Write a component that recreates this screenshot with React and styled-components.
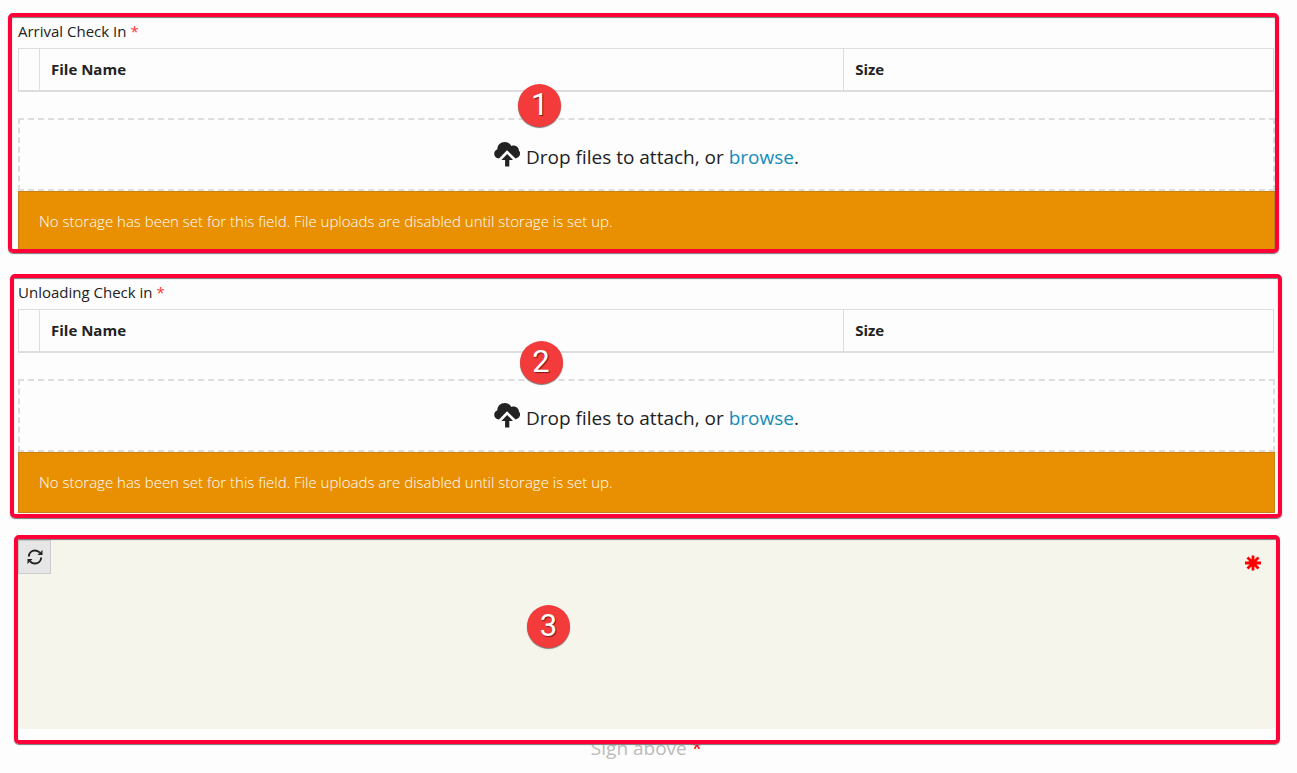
import React from "react";
import styled, { createGlobalStyle } from "styled-components";

const GlobalStyle = createGlobalStyle`
  *, *::before, *::after { box-sizing: border-box; }
  body {
    margin: 0;
    background: #fdfdfd;
    color: #222;
    font: 300 15px/20px "Open Sans", "Noto Sans", sans-serif;
  }
`;

const Page = styled.main`
  display: flex;
  flex-direction: column;
  padding: 21px 22px 12px 18px;
`;

const Section = styled.section`
  position: relative;
  margin-bottom: ${(p) => p.$gap}px;
`;

const FieldTitle = styled.h2`
  margin: 0 0 7px;
  font-size: 15px;
  line-height: 20px;
  font-weight: 400;
`;

const Required = styled.span`
  color: ${(p) => p.$color || "#f33"};
`;

const FileTable = styled.table`
  width: calc(100% - 1px);
  table-layout: fixed;
  border-collapse: separate;
  border-spacing: 0;
  border: 1px solid #ddd;
  border-bottom-width: 2px;
  margin-bottom: 26px;
`;

const HeadCell = styled.th`
  width: ${(p) => p.$width || "auto"};
  height: 41px;
  padding: 0 0 2px ${(p) => (p.$narrow ? 0 : 11)}px;
  border-right: ${(p) => (p.$last ? "none" : "1px solid #ddd")};
  text-align: left;
  font-size: 15px;
  line-height: 20px;
  font-weight: 700;
`;

const DropZone = styled.div`
  display: flex;
  align-items: center;
  justify-content: center;
  gap: 6px;
  height: 73px;
  padding-top: 4px;
  border: 2px dashed #ddd;
  font-size: 19px;
  line-height: 28px;
  font-weight: 400;
`;

const CloudIcon = styled.svg`
  width: 26px;
  height: 26px;
  margin-bottom: 5px;
  fill: #222;
`;

const BrowseLink = styled.a`
  color: #158cba;
  text-decoration: none;
`;

const Warning = styled.div`
  height: 61px;
  padding: 19px 20px;
  border: 1px solid #c98112;
  background: #e99002;
  color: #fff;
`;

const SignaturePad = styled.div`
  display: flex;
  justify-content: space-between;
  align-items: flex-start;
  height: 189px;
  border-radius: 4px;
  background: #f5f5eb;
`;

const ResetButton = styled.button`
  display: flex;
  align-items: center;
  justify-content: center;
  width: 33px;
  height: 34px;
  padding: 0;
  border: 1px solid #ccc;
  background: #e6e6e6;
  color: #222;
`;

const RefreshIcon = styled.svg`
  width: 16px;
  height: 16px;
`;

const AsteriskIcon = styled.svg`
  width: 16px;
  height: 16px;
  margin: 15px 14px;
`;

const SignCaption = styled.p`
  margin: 0;
  padding-top: 5px;
  color: #bbb;
  font-size: 19px;
  line-height: 28px;
  font-weight: 400;
  text-align: center;
`;

const Frame = styled.div`
  position: absolute;
  inset: ${(p) => p.$inset};
  border: 4px solid #ff0038;
  border-radius: 5px;
  box-shadow: 0 1px 1px #777, inset 0 1px 1px #777;
  pointer-events: none;
`;

const Badge = styled.span`
  position: absolute;
  top: ${(p) => p.$top}px;
  left: ${(p) => p.$left}%;
  width: 43px;
  height: 43px;
  border-radius: 50%;
  background: #f33b3b;
  box-shadow: 0 1px 1px #777;
  color: #fff;
  font: 400 31px/42px Roboto, sans-serif;
  text-align: center;
  text-shadow: 1px 1px 1px #7a1717;
`;

function UploadCloud() {
  return (
    <CloudIcon viewBox="0 0 26 26" aria-hidden="true">
      <path d="M5 17.500C2 17.200.2 15.300.2 12.800c0-2.200 1.300-3.900 3.200-4.500C3.300 4 6.500 1 10.700 1c3 0 5.400 1.500 6.700 4 .7-.3 1.300-.4 2-.4 3.200 0 5.500 2.300 5.500 5 .8.800 1.200 1.800 1.200 3 0 2.500-1.800 4.300-4.600 4.800L13 9.200Z" />
      <path d="M13.200 13 19 19h-3.700v6.500h-4.200V19H7.400Z" />
    </CloudIcon>
  );
}

function Refresh() {
  return (
    <RefreshIcon viewBox="0 0 16 16" aria-hidden="true">
      <path
        d="M1.800 7.500C2 4 4.700 1.500 8 1.500c2 0 3.600.8 4.800 2.200M14.200 8.500C14 12 11.300 14.500 8 14.500c-2 0-3.600-.8-4.800-2.200"
        fill="none"
        stroke="currentColor"
        strokeWidth="2"
      />
      <path d="M15.500 1v5H10.500ZM.5 15v-5h5Z" fill="currentColor" />
    </RefreshIcon>
  );
}

function Asterisk() {
  return (
    <AsteriskIcon viewBox="0 0 16 16" role="img" aria-label="Required">
      <path
        d="M8 .5v15M0 8h16M2.500 2.500l11 11M13.500 2.500l-11 11"
        stroke="#f00"
        strokeWidth="2.8"
      />
    </AsteriskIcon>
  );
}

function UploadField({ title, gap, frame, badge, badgeTop, badgeLeft }) {
  return (
    <Section $gap={gap}>
      <FieldTitle>
        {title} <Required>*</Required>
      </FieldTitle>
      <FileTable aria-label={title}>
        <thead>
          <tr>
            <HeadCell $width="21px" $narrow />
            <HeadCell>File Name</HeadCell>
            <HeadCell $width="34.2%" $last>
              Size
            </HeadCell>
          </tr>
        </thead>
      </FileTable>
      <DropZone>
        <UploadCloud />
        <span>
          Drop files to attach, or <BrowseLink href="#browse">browse</BrowseLink>.
        </span>
      </DropZone>
      <Warning>
        No storage has been set for this field. File uploads are disabled until storage is set up.
      </Warning>
      <Frame $inset={frame} />
      <Badge $top={badgeTop} $left={badgeLeft}>
        {badge}
      </Badge>
    </Section>
  );
}

export default function App() {
  return (
    <>
      <GlobalStyle />
      <Page>
        <UploadField
          title="Arrival Check In"
          gap={30}
          frame="-8px -4px -1px -10px"
          badge="1"
          badgeTop={63}
          badgeLeft={39.8}
        />
        <UploadField
          title="Unloading Check in"
          gap={27}
          frame="-8px -7px -5px -8px"
          badge="2"
          badgeTop={59}
          badgeLeft={39.9}
        />
        <Section $gap={0}>
          <SignaturePad>
            <ResetButton type="button" aria-label="Clear signature">
              <Refresh />
            </ResetButton>
            <Asterisk />
          </SignaturePad>
          <SignCaption>
            Sign above <Required $color="#f00">*</Required>
          </SignCaption>
          <Frame $inset="-5px -5px 18px -4px" />
          <Badge $top={65} $left={40.5}>
            3
          </Badge>
        </Section>
      </Page>
    </>
  );
}
